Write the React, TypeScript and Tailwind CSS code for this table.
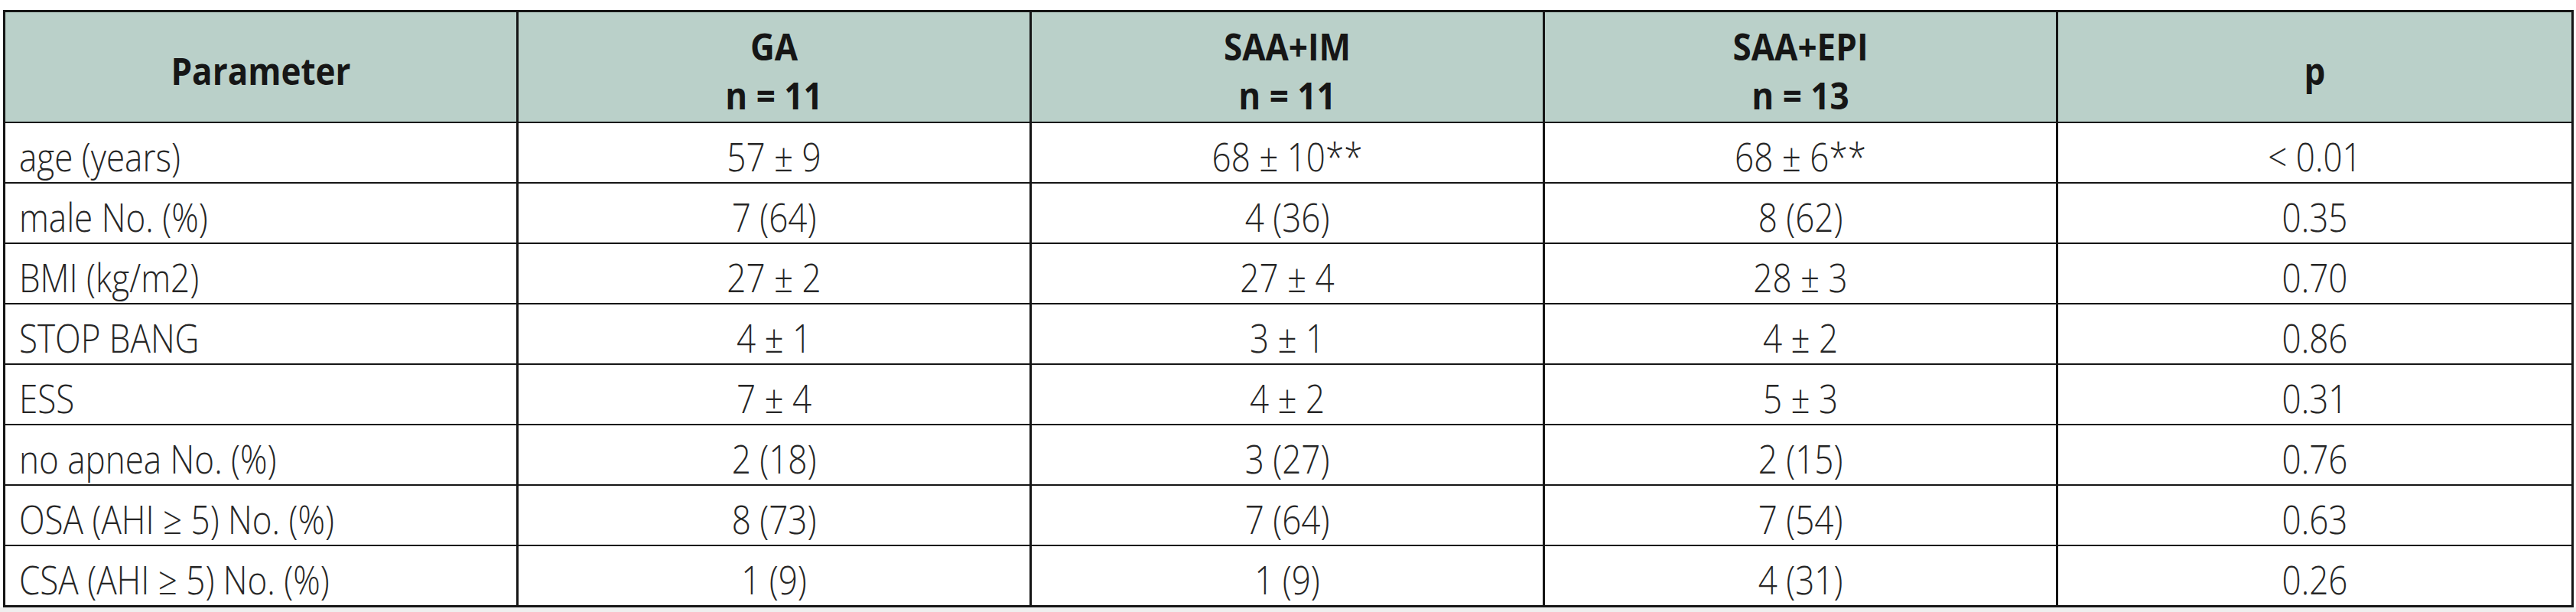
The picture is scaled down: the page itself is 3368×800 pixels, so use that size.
import React from "react";

const rows: string[][] = [
  ["age (years)", "57 ± 9", "68 ± 10**", "68 ± 6**", "< 0.01"],
  ["male No. (%)", "7 (64)", "4 (36)", "8 (62)", "0.35"],
  ["BMI (kg/m2)", "27 ± 2", "27 ± 4", "28 ± 3", "0.70"],
  ["STOP BANG", "4 ± 1", "3 ± 1", "4 ± 2", "0.86"],
  ["ESS", "7 ± 4", "4 ± 2", "5 ± 3", "0.31"],
  ["no apnea No. (%)", "2 (18)", "3 (27)", "2 (15)", "0.76"],
  ["OSA (AHI ≥ 5) No. (%)", "8 (73)", "7 (64)", "7 (54)", "0.63"],
  ["CSA (AHI ≥ 5) No. (%)", "1 (9)", "1 (9)", "4 (31)", "0.26"],
];

const headers: string[][] = [
  ["Parameter"],
  ["GA", "n = 11"],
  ["SAA+IM", "n = 11"],
  ["SAA+EPI", "n = 13"],
  ["p"],
];

export default function App() {
  return (
    <div
      className="w-[3368px] h-[800px] flex flex-col bg-white"
      style={{ fontFamily: '"Open Sans", "Noto Sans", sans-serif' }}
    >
      <div className="bg-white pt-[13px] pl-[4px]">
        <div className="w-[3361px] border-[3px] border-[#151515] box-border">
          <div className="grid grid-cols-5 h-[145px] bg-[#bad0c9] border-b-2 border-[#151515] box-border">
            {headers.map((h, i) => (
              <div
                key={i}
                className={`flex flex-col items-center justify-center pt-[10px] text-[44px] leading-[64px] font-bold text-[#161616] ${
                  i < 4 ? "border-r-[3px] border-[#151515]" : ""
                }`}
              >
                {h.map((line, j) => (
                  <span key={j} className="inline-block scale-y-[1.08]">
                    {line}
                  </span>
                ))}
              </div>
            ))}
          </div>
          {rows.map((r, ri) => (
            <div
              key={ri}
              className={`grid grid-cols-5 box-border ${
                ri < rows.length - 1 ? "h-[79px] border-b-2 border-[#151515]" : "h-[77px]"
              }`}
            >
              {r.map((c, ci) => (
                <div
                  key={ci}
                  className={`flex items-center pt-[8px] text-[44px] leading-none font-light text-[#262626] whitespace-nowrap ${
                    ci === 0 ? "justify-start pl-[18px]" : "justify-center"
                  } ${ci < 4 ? "border-r-[3px] border-[#151515]" : ""}`}
                >
                  <span className="inline-block scale-y-[1.15]">{c}</span>
                </div>
              ))}
            </div>
          ))}
        </div>
      </div>
      <div className="flex-1 bg-[#efefef]" />
    </div>
  );
}
